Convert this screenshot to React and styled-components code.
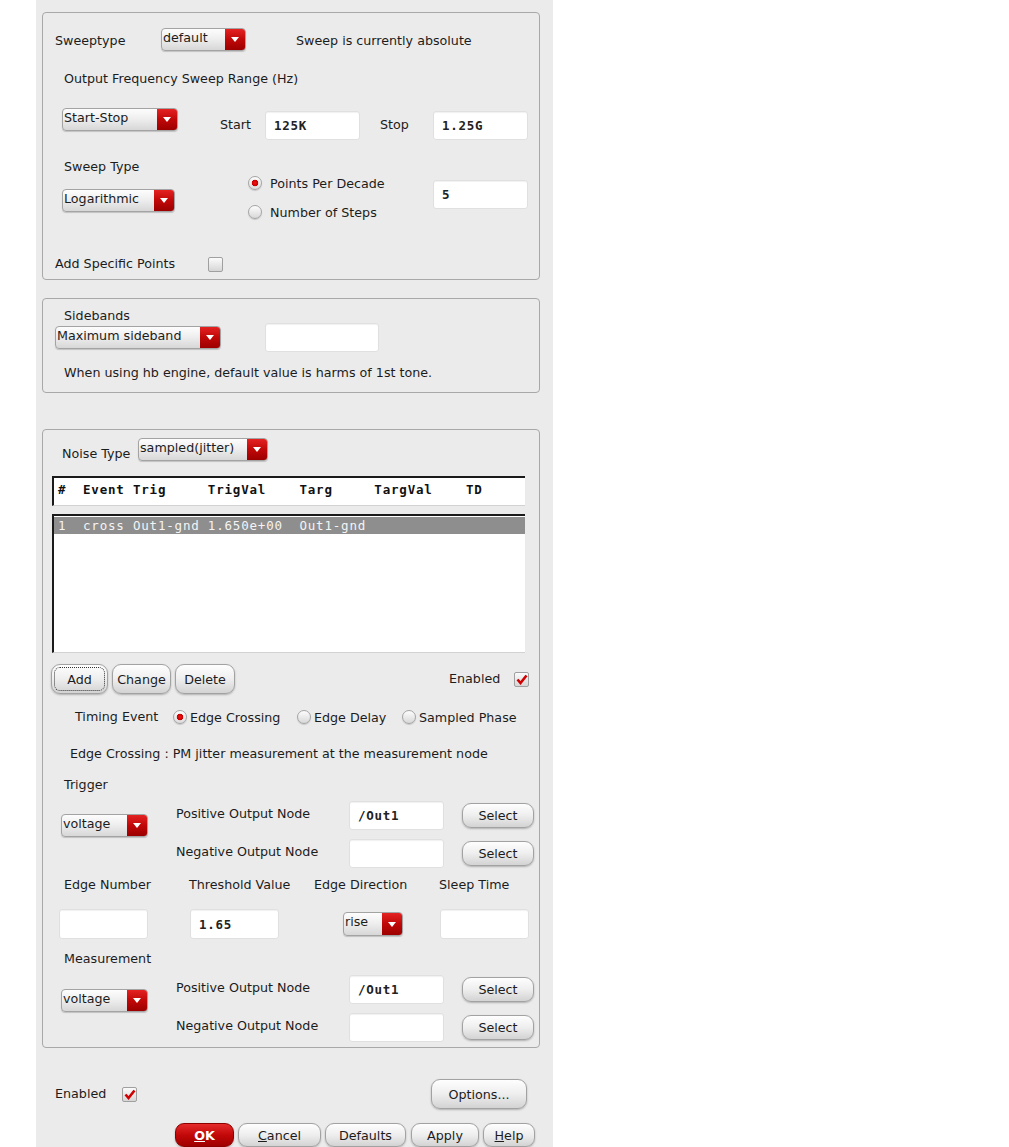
import React from "react"
import styled, { createGlobalStyle } from "styled-components"

const GlobalStyle = createGlobalStyle`
  body {
    margin: 0;
    background: #fff;
    font-family: "DejaVu Sans", "Liberation Sans", sans-serif;
    font-size: 12.7px;
    color: #1c1c1c;
  }
`

const Dialog = styled.div`
  width: 517px;
  min-height: 1147px;
  margin-left: 36px;
  box-sizing: border-box;
  padding: 12px 13px 0 6px;
  background: #ebebeb;
  display: flex;
  flex-direction: column;
`

const Panel = styled.section`
  box-sizing: border-box;
  height: ${(p) => p.$h}px;
  margin-top: ${(p) => p.$mt || 0}px;
  border: 1px solid #a8a8a8;
  border-radius: 4px;
  display: flex;
  flex-direction: column;
`

const Row = styled.div`
  display: flex;
  align-items: ${(p) => p.$align || "center"};
  margin-top: ${(p) => p.$mt || 0}px;
  padding-left: ${(p) => p.$pl || 0}px;
  padding-right: ${(p) => p.$pr || 0}px;
  height: ${(p) => (p.$h ? `${p.$h}px` : "auto")};
  justify-content: ${(p) => p.$justify || "flex-start"};
`

const Col = styled.div`
  display: flex;
  flex-direction: column;
  width: ${(p) => (p.$w ? `${p.$w}px` : "auto")};
  padding-left: ${(p) => p.$pl || 0}px;
`

const Label = styled.span`
  display: block;
  flex: none;
  width: ${(p) => (p.$w ? `${p.$w}px` : "auto")};
  margin-left: ${(p) => p.$ml || 0}px;
  margin-top: ${(p) => p.$mt || 0}px;
  margin-bottom: ${(p) => p.$mb || 0}px;
  padding-left: ${(p) => p.$pl || 0}px;
  line-height: ${(p) => p.$lh || 16}px;
  white-space: nowrap;
`

const DropBox = styled.div`
  flex: none;
  display: flex;
  box-sizing: border-box;
  width: ${(p) => p.$w}px;
  height: ${(p) => p.$h || 23}px;
  margin-top: ${(p) => p.$mt || 0}px;
  margin-left: ${(p) => p.$ml || 0}px;
  align-self: ${(p) => p.$self || "auto"};
  border: 1px solid #a3a3a3;
  border-radius: 4px;
  overflow: hidden;
  background: linear-gradient(#fdfdfd, #efefef 45%, #d7d7d7);
  box-shadow: 0 1px 1px rgba(0, 0, 0, 0.18);
`

const DropText = styled.span`
  flex: 1;
  padding-left: 1px;
  line-height: 18px;
  font-size: 12.7px;
  white-space: nowrap;
  overflow: hidden;
`

const DropButton = styled.span`
  flex: none;
  width: 20px;
  display: flex;
  align-items: center;
  justify-content: center;
  background: linear-gradient(#e42222, #c00808 50%, #9c0000);
`

const Dropdown = ({ w, h, mt, ml, self, children }) => (
  <DropBox $w={w} $h={h} $mt={mt} $ml={ml} $self={self}>
    <DropText>{children}</DropText>
    <DropButton>
      <svg width="8" height="5" viewBox="0 0 8 5">
        <polygon points="0,0 8,0 4,5" fill="#fff" />
      </svg>
    </DropButton>
  </DropBox>
)

const Field = styled.div`
  flex: none;
  box-sizing: border-box;
  width: ${(p) => p.$w || 95}px;
  height: ${(p) => p.$h || 29}px;
  margin-left: ${(p) => p.$ml || 0}px;
  margin-top: ${(p) => p.$mt || 0}px;
  background: #fff;
  border: 1px solid #e0e0e0;
  border-radius: 3px;
  box-shadow: inset 0 1px 1px rgba(0, 0, 0, 0.06);
  padding-left: 8px;
  display: flex;
  align-items: center;
  font-family: "DejaVu Sans Mono", "Liberation Mono", monospace;
  font-weight: bold;
  font-size: 12.5px;
  letter-spacing: 0.7px;
  color: #222;
`

const Push = styled.button`
  flex: none;
  box-sizing: border-box;
  width: ${(p) => p.$w}px;
  height: ${(p) => p.$h || 25}px;
  margin-left: ${(p) => p.$ml || 0}px;
  padding: 0;
  border: 1px solid #a2a2a2;
  border-radius: 9px;
  background: linear-gradient(#fefefe, #eeeeee 50%, #d3d3d3);
  box-shadow: 0 1px 2px rgba(0, 0, 0, 0.25);
  font-family: "DejaVu Sans", "Liberation Sans", sans-serif;
  font-size: 12.7px;
  color: #1c1c1c;
  outline: ${(p) => (p.$focus ? "1px dotted #333" : "none")};
  outline-offset: -4px;
  u {
    text-decoration: underline;
  }
`

const OkButton = styled(Push)`
  border-color: #8c0000;
  background: linear-gradient(#e42a2a, #c20808 50%, #a00000);
  color: #fff;
  font-weight: bold;
`

const RadioDot = styled.span`
  flex: none;
  box-sizing: border-box;
  width: 14px;
  height: 14px;
  border-radius: 50%;
  border: 1px solid #a5a5a5;
  background: ${(p) =>
    p.$on
      ? "radial-gradient(circle, #f01414 0, #c80000 3px, transparent 3.6px), linear-gradient(#fdfdfd, #dcdcdc)"
      : "linear-gradient(#fdfdfd, #d8d8d8)"};
  box-shadow: 0 1px 1px rgba(0, 0, 0, 0.15);
`

const RadioItem = styled.div`
  display: flex;
  align-items: center;
  width: ${(p) => (p.$w ? `${p.$w}px` : "auto")};
  height: ${(p) => p.$h || 16}px;
  margin-top: ${(p) => p.$mt || 0}px;
  gap: ${(p) => p.$gap || 8}px;
  white-space: nowrap;
`

const Radio = ({ on, label, w, h, mt, gap }) => (
  <RadioItem $w={w} $h={h} $mt={mt} $gap={gap}>
    <RadioDot $on={on} />
    <span>{label}</span>
  </RadioItem>
)

const CheckBox = styled.span`
  flex: none;
  box-sizing: border-box;
  width: 15px;
  height: 15px;
  margin-left: ${(p) => p.$ml || 0}px;
  border: 1px solid #a0a0a0;
  border-radius: 2px;
  background: linear-gradient(#fbfbfb, #d6d6d6);
  display: flex;
  align-items: center;
  justify-content: center;
`

const Check = ({ on, ml }) => (
  <CheckBox $ml={ml}>
    {on && (
      <svg width="12" height="11" viewBox="0 0 12 11">
        <path d="M1.5 5.5 L4.5 9 L10.5 1.5" fill="none" stroke="#d00000" strokeWidth="2.6" />
      </svg>
    )}
  </CheckBox>
)

const TableBox = styled.div`
  box-sizing: border-box;
  width: 473px;
  height: ${(p) => p.$h}px;
  margin-left: 9px;
  margin-top: ${(p) => p.$mt || 0}px;
  background: #fff;
  border-top: 2px solid #1a1a1a;
  border-left: 2px solid #1a1a1a;
  border-bottom: 1px solid #d2d2d2;
  font-family: "DejaVu Sans Mono", "Liberation Mono", monospace;
  font-size: 12.5px;
  letter-spacing: 0.8px;
  white-space: pre;
`

const HeaderLine = styled.div`
  padding: 3px 0 0 4px;
  line-height: 17px;
  font-weight: bold;
  color: #111;
`

const SelectedLine = styled.div`
  margin-top: 1px;
  padding-left: 4px;
  height: 17px;
  line-height: 17px;
  background: #8e8e8e;
  color: #f4f4f4;
`

const NodeGrid = styled.div`
  display: grid;
  grid-template-columns: 115px 173px 113px 72px;
  grid-template-rows: 29px 29px;
  row-gap: 9px;
  align-items: center;
  margin-top: ${(p) => p.$mt || 0}px;
  padding-left: 18px;
`

const GridDrop = styled.div`
  grid-row: 1 / span 2;
  grid-column: 1;
  align-self: start;
  padding-top: ${(p) => p.$pt}px;
`

const EdgeGrid = styled.div`
  display: grid;
  grid-template-columns: repeat(4, 125px);
  align-items: start;
  margin-top: ${(p) => p.$mt || 0}px;
  padding-left: 16px;
`

const NodeBlock = ({ mt, dropTop }) => (
  <NodeGrid $mt={mt}>
    <GridDrop $pt={dropTop}>
      <Dropdown w={87}>voltage</Dropdown>
    </GridDrop>
    <Label $mb={3}>Positive Output Node</Label>
    <Field>/Out1</Field>
    <Push $w={72}>Select</Push>
    <Label $mb={3}>Negative Output Node</Label>
    <Field />
    <Push $w={72}>Select</Push>
  </NodeGrid>
)

export default function App() {
  return (
    <>
      <GlobalStyle />
      <Dialog>
        <Panel $h={268}>
          <Row $mt={15} $pl={12} $h={23}>
            <Label $w={106} $mt={3}>Sweeptype</Label>
            <Dropdown w={85} self="flex-start">default</Dropdown>
            <Label $ml={50} $mt={3}>Sweep is currently absolute</Label>
          </Row>
          <Row $mt={20} $pl={21}>
            <Label>Output Frequency Sweep Range (Hz)</Label>
          </Row>
          <Row $mt={21} $pl={19} $align="flex-start" $h={32}>
            <Dropdown w={116}>Start-Stop</Dropdown>
            <Label $w={45} $ml={42} $mt={2} $lh={29}>Start</Label>
            <Field $mt={3}>125K</Field>
            <Label $w={53} $ml={20} $mt={2} $lh={29}>Stop</Label>
            <Field $mt={3}>1.25G</Field>
          </Row>
          <Row $mt={19} $pl={19} $align="flex-start">
            <Col $w={186}>
              <Label $pl={2}>Sweep Type</Label>
              <Dropdown w={113} mt={14}>Logarithmic</Dropdown>
            </Col>
            <Col $w={185}>
              <Radio on label="Points Per Decade" mt={14} h={20} />
              <Radio label="Number of Steps" mt={9} h={20} />
            </Col>
            <Field $mt={21}>5</Field>
          </Row>
          <Row $mt={34} $pl={12}>
            <Label $w={153}>Add Specific Points</Label>
            <Check />
          </Row>
        </Panel>

        <Panel $h={95} $mt={18}>
          <Row $mt={10} $pl={21}>
            <Label $lh={14}>Sidebands</Label>
          </Row>
          <Row $pl={12} $h={29}>
            <Dropdown w={166}>Maximum sideband</Dropdown>
            <Field $w={114} $ml={44} />
          </Row>
          <Row $mt={13} $pl={21}>
            <Label>When using hb engine, default value is harms of 1st tone.</Label>
          </Row>
        </Panel>

        <Panel $h={619} $mt={36}>
          <Row $mt={8} $pl={19} $align="flex-start">
            <Label $w={76} $mt={8}>Noise Type</Label>
            <Dropdown w={130}>sampled(jitter)</Dropdown>
          </Row>
          <TableBox $h={30} $mt={14}>
            <HeaderLine>{"#  Event Trig     TrigVal    Targ     TargVal    TD"}</HeaderLine>
          </TableBox>
          <TableBox $h={139} $mt={8}>
            <SelectedLine>{"1  cross Out1-gnd 1.650e+00  Out1-gnd"}</SelectedLine>
          </TableBox>
          <Row $mt={11} $pl={8} $pr={10} $h={30}>
            <Push $w={57} $h={30} $focus>Add</Push>
            <Push $w={59} $h={30} $ml={4}>Change</Push>
            <Push $w={60} $h={30} $ml={4}>Delete</Push>
            <Label $ml={214}>Enabled</Label>
            <Check on ml={14} />
          </Row>
          <Row $mt={15} $pl={32} $h={16}>
            <Label $w={98}>Timing Event</Label>
            <Radio on label="Edge Crossing" w={124} gap={3} />
            <Radio label="Edge Delay" w={105} gap={3} />
            <Radio label="Sampled Phase" gap={3} />
          </Row>
          <Row $mt={21} $pl={27}>
            <Label>Edge Crossing : PM jitter measurement at the measurement node</Label>
          </Row>
          <Row $mt={15} $pl={21}>
            <Label>Trigger</Label>
          </Row>
          <NodeBlock mt={8} dropTop={13} />
          <EdgeGrid $mt={9}>
            <Label $pl={5}>Edge Number</Label>
            <Label $pl={5}>Threshold Value</Label>
            <Label $pl={5}>Edge Direction</Label>
            <Label $pl={5}>Sleep Time</Label>
          </EdgeGrid>
          <EdgeGrid $mt={16}>
            <Field $w={89} $h={30} />
            <Field $w={89} $h={30} $ml={6}>1.65</Field>
            <Dropdown w={60} h={24} mt={3} ml={34}>rise</Dropdown>
            <Field $w={89} $h={30} $ml={6} />
          </EdgeGrid>
          <Row $mt={12} $pl={21}>
            <Label>Measurement</Label>
          </Row>
          <NodeBlock mt={8} dropTop={14} />
        </Panel>

        <Row $mt={31} $pl={13} $pr={13} $h={30}>
          <Label $w={67}>Enabled</Label>
          <Check on />
          <Push $w={96} $h={30} style={{ marginLeft: "auto" }}>Options...</Push>
        </Row>
        <Row $mt={14} $pr={5} $justify="flex-end" $h={24}>
          <OkButton $w={59} $h={24}><u>O</u>K</OkButton>
          <Push $w={83} $h={24} $ml={4}><u>C</u>ancel</Push>
          <Push $w={81} $h={24} $ml={4}>Defaults</Push>
          <Push $w={68} $h={24} $ml={5}>Apply</Push>
          <Push $w={52} $h={24} $ml={4}><u>H</u>elp</Push>
        </Row>
      </Dialog>
    </>
  )
}
